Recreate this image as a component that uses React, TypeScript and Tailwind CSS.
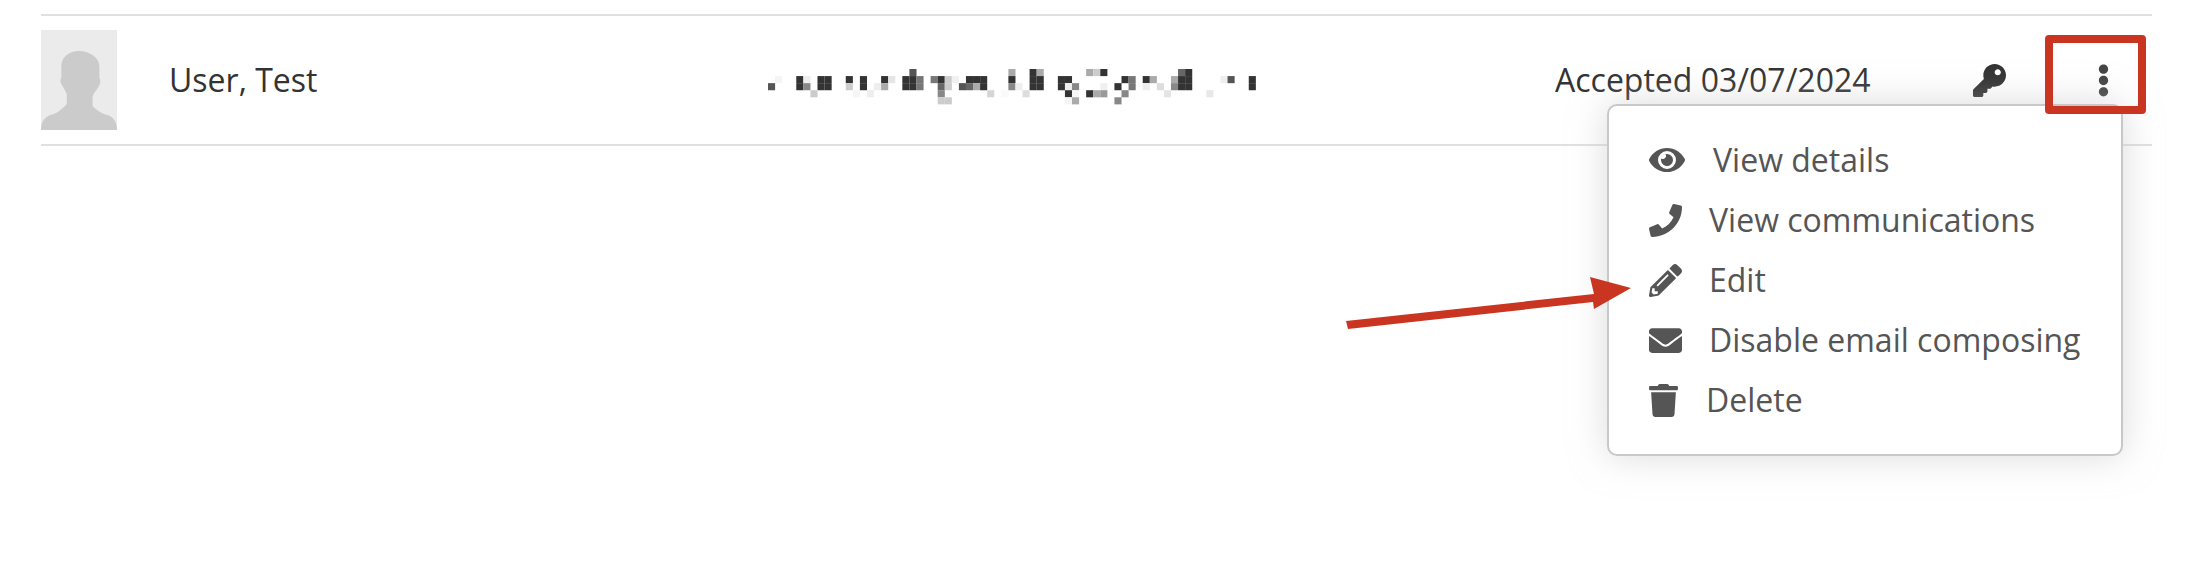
import React from "react";
import { FaEye, FaPhone, FaPencilAlt, FaEnvelope, FaTrash, FaKey, FaEllipsisV } from "react-icons/fa";

const mosaic: [number, number, string][] = [
  [20,0,"#555"],[34,0,"#aaa"],[37,0,"#333"],[38,0,"#aaa"],[45,0,"#aaa"],[46,0,"#ccc"],[47,0,"#333"],[58,0,"#666"],[59,0,"#333"],
  [1,1,"#f5f5f5"],[4,1,"#333"],[5,1,"#eee"],[7,1,"#333"],[8,1,"#333"],[11,1,"#333"],[13,1,"#333"],[16,1,"#333"],[17,1,"#e5e5e5"],[19,1,"#333"],[20,1,"#333"],[21,1,"#777"],[23,1,"#777"],[24,1,"#333"],[25,1,"#ccc"],[26,1,"#f0f0f0"],[28,1,"#333"],[29,1,"#333"],[30,1,"#333"],[34,1,"#333"],[37,1,"#333"],[38,1,"#333"],[41,1,"#333"],[42,1,"#333"],[50,1,"#333"],[51,1,"#777"],[53,1,"#333"],[54,1,"#aaa"],[57,1,"#aaa"],[58,1,"#333"],[59,1,"#333"],[64,1,"#eee"],[65,1,"#555"],[68,1,"#333"],
  [0,2,"#555"],[4,2,"#333"],[5,2,"#888"],[7,2,"#333"],[8,2,"#333"],[11,2,"#ccc"],[13,2,"#333"],[15,2,"#eee"],[16,2,"#aaa"],[19,2,"#333"],[20,2,"#333"],[21,2,"#777"],[24,2,"#666"],[25,2,"#ccc"],[27,2,"#555"],[28,2,"#666"],[29,2,"#aaa"],[30,2,"#333"],[34,2,"#888"],[35,2,"#eee"],[37,2,"#333"],[38,2,"#333"],[41,2,"#333"],[42,2,"#eee"],[43,2,"#888"],[47,2,"#f0f0f0"],[49,2,"#333"],[51,2,"#777"],[53,2,"#eee"],[55,2,"#ddd"],[57,2,"#888"],[58,2,"#333"],[59,2,"#333"],[68,2,"#333"],
  [6,3,"#ccc"],[12,3,"#f5f5f5"],[14,3,"#eee"],[24,3,"#888"],[31,3,"#d5d5d5"],[33,3,"#fafafa"],[36,3,"#ddd"],[42,3,"#333"],[43,3,"#f5f5f5"],[45,3,"#333"],[46,3,"#aaa"],[47,3,"#999"],[50,3,"#888"],[56,3,"#e5e5e5"],[62,3,"#e8e8e8"],
  [24,4,"#ccc"],[25,4,"#ccc"],[42,4,"#f5f5f5"],[43,4,"#aaa"],[49,4,"#888"],
];

function Avatar() {
  return (
    <svg width="76" height="100" viewBox="0 0 56 100" preserveAspectRatio="none" className="shrink-0 block">
      <rect width="56" height="100" fill="#ebebeb" />
      <path
        d="M28 21C20 21 15 28 15 36V48C14 49 14 52 15 54C16 57 18 60 19 64V74C15 80 11 84 7 85C3 87 0 91 0 100H56C56 91 53 87 49 85C45 84 41 80 38 76V67C39 62 42 59 43 55C44 52 44 50 43 48V36C43 28 36 21 28 21Z"
        fill="#cbcbcb"
      />
    </svg>
  );
}

export default function App() {
  const items = [
    { icon: <FaEye className="w-[36px] h-[36px] mr-[28px]" />, label: "View details" },
    { icon: <FaPhone className="w-[33px] h-[33px] mr-[27px]" />, label: "View communications" },
    { icon: <FaPencilAlt className="w-[33px] h-[33px] mr-[27px]" />, label: "Edit" },
    { icon: <FaEnvelope className="w-[33px] h-[33px] mr-[27px]" />, label: "Disable email composing" },
    { icon: <FaTrash className="w-[29px] h-[33px] mr-[28px]" />, label: "Delete" },
  ];
  return (
    <div className="relative w-[2194px] h-[572px] bg-white overflow-hidden font-['Open_Sans',sans-serif]">
      <div className="pt-[14px] pl-[41px] pr-[42px]">
        <div className="flex items-center h-[132px] border-y-2 border-[#e0e0e0] text-[#333] text-[32px]">
          <Avatar />
          <span className="ml-[52px] w-[599px] shrink-0">User, Test</span>
          <svg width="495" height="36" viewBox="0 0 495 36" className="shrink-0 block mt-[14px]">
            {mosaic.map(([c, r, f], i) => (
              <rect key={i} x={c * 7.07} y={r * 7.07} width="7.1" height="7.1" fill={f} />
            ))}
          </svg>
          <span className="ml-[292px] w-[418px] shrink-0">Accepted 03/07/2024</span>
          <FaKey className="w-[33px] h-[33px] shrink-0 text-[#333]" />
          <FaEllipsisV className="ml-[81px] w-[33px] h-[33px] shrink-0 text-[#444]" />
        </div>
      </div>

      <div className="absolute left-[1607px] top-[104px] w-[516px] h-[352px] bg-white border-2 border-[#c8c8c8] rounded-[10px] shadow-[0_0_36px_rgba(195,195,195,0.6)] pt-[24px] pl-[40px] text-[32px] text-[#555]">
        {items.map((it) => (
          <div key={it.label} className="flex items-center h-[60px]">
            {it.icon}
            <span>{it.label}</span>
          </div>
        ))}
      </div>

      <div className="absolute left-[2045px] top-[35px] w-[101px] h-[79px] border-[8px] border-[#c93521] rounded-[4px]" />

      <svg className="absolute left-[1340px] top-[270px]" width="300" height="60" viewBox="0 0 300 60">
        <polygon points="6,51 254,24 250,7 291,18 254,39 253,32 8,59" fill="#c93521" />
      </svg>
    </div>
  );
}
